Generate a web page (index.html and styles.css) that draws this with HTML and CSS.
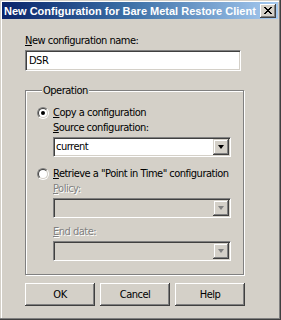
FILE: index.html
```html
<!DOCTYPE html>
<html>
<head>
<meta charset="utf-8">
<link rel="stylesheet" href="styles.css">
</head>
<body>
<div class="window">
  <div class="titlebar">
    <span class="title">New Configuration for Bare Metal Restore Client</span>
    <span class="close"><svg width="8" height="7" viewBox="0 0 8 7"><path d="M0 0h2v1h-2zM6 0h2v1h-2zM1 1h2v1h-2zM5 1h2v1h-2zM2 2h4v1h-4zM3 3h2v1h-2zM2 4h4v1h-4zM1 5h2v1h-2zM5 5h2v1h-2zM0 6h2v1h-2zM6 6h2v1h-2z" fill="#000"/></svg></span>
  </div>
  <div class="content">
    <div class="label name-label"><u>N</u>ew configuration name:</div>
    <div class="textbox">DSR</div>
    <fieldset class="group">
      <legend class="legend">Operation</legend>
      <div class="radio-row first">
        <span class="radio checked"><span class="dot"></span></span>
        <span class="radio-text"><u>C</u>opy a configuration</span>
      </div>
      <div class="sub">
        <div class="label"><u>S</u>ource configuration:</div>
        <div class="combo">
          <span class="combo-text">current</span>
          <span class="combo-btn"><span class="arrow"></span></span>
        </div>
      </div>
      <div class="radio-row second">
        <span class="radio"></span>
        <span class="radio-text"><u>R</u>etrieve a "Point in Time" configuration</span>
      </div>
      <div class="sub">
        <div class="label disabled"><u>P</u>olicy:</div>
        <div class="combo off">
          <span class="combo-text"></span>
          <span class="combo-btn"><span class="arrow"></span></span>
        </div>
        <div class="label disabled end-label"><u>E</u>nd date:</div>
        <div class="combo off">
          <span class="combo-text"></span>
          <span class="combo-btn"><span class="arrow"></span></span>
        </div>
      </div>
    </fieldset>
    <div class="buttons">
      <div class="btn">OK</div>
      <div class="btn">Cancel</div>
      <div class="btn">Help</div>
    </div>
  </div>
</div>
</body>
</html>
```

FILE: styles.css
```css
html, body {
  margin: 0;
  padding: 0;
  background: #d4d0c8;
}
.window {
  width: 281px;
  height: 320px;
  box-sizing: border-box;
  padding: 2px 3px 3px 2px;
  background: #d4d0c8;
  box-shadow: inset -1px -1px 0 #404040, inset -2px -2px 0 #808080, inset 1px 1px 0 #d4d0c8, inset 2px 2px 0 #ffffff;
  font-family: "DejaVu Sans Condensed", "DejaVu Sans", sans-serif;
  font-stretch: condensed;
  font-size: 11px;
  letter-spacing: -0.5px;
  color: #000;
}
.titlebar {
  height: 17px;
  background: linear-gradient(90deg, #0a246a 0%, #3a6ea5 45%, #a6caf0 100%);
  display: flex;
  align-items: center;
  justify-content: space-between;
  padding: 0 2px 0 2px;
}
.title {
  color: #fff;
  font-family: "Liberation Sans", Arial, sans-serif;
  font-stretch: normal;
  font-weight: bold;
  font-size: 11px;
  letter-spacing: 0;
  white-space: nowrap;
}
.close {
  width: 16px;
  height: 14px;
  box-sizing: border-box;
  background: #d4d0c8;
  box-shadow: inset -1px -1px 0 #404040, inset 1px 1px 0 #ffffff, inset -2px -2px 0 #808080;
  display: flex;
  align-items: center;
  justify-content: center;
  padding: 0 1px 1px 0;
}
.close svg { display: block; }
.content {
  padding: 0 0 0 23px;
}
.label {
  line-height: 13px;
  height: 13px;
  white-space: nowrap;
}
.name-label {
  margin-top: 15px;
}
.textbox {
  margin-top: 3px;
  width: 216px;
  height: 21px;
  box-sizing: border-box;
  background: #fff;
  border: 1px solid;
  border-color: #808080 #ffffff #ffffff #808080;
  box-shadow: inset 1px 1px 0 #404040, inset -1px -1px 0 #d4d0c8;
  padding: 0 0 0 3px;
  line-height: 19px;
}
.group {
  margin: 13px 0 0 0;
  width: 219px;
  box-sizing: border-box;
  border: 1px solid #808080;
  box-shadow: 1px 1px 0 #ffffff, inset 1px 1px 0 #ffffff;
  padding: 9px 0 13px 11px;
  min-inline-size: 0;
}
.legend {
  padding: 0 1px;
  margin-left: 5px;
  line-height: 13px;
  background: #d4d0c8;
}
.radio-row {
  display: flex;
  align-items: center;
  height: 13px;
}
.radio-row.second {
  margin-top: 10px;
}
.radio {
  width: 12px;
  height: 12px;
  box-sizing: border-box;
  border-radius: 50%;
  border: 1px solid;
  border-color: #808080 #ffffff #ffffff #808080;
  position: relative;
  flex: none;
}
.radio::before {
  content: "";
  position: absolute;
  inset: 0;
  border-radius: 50%;
  border: 1px solid;
  border-color: #404040 #d4d0c8 #d4d0c8 #404040;
  background: #fff;
}
.radio .dot {
  position: absolute;
  left: 3px;
  top: 3px;
  width: 4px;
  height: 4px;
  border-radius: 50%;
  background: #000;
  z-index: 1;
}
.radio-text {
  margin-left: 4px;
  white-space: nowrap;
}
.sub {
  padding-left: 16px;
}
.sub .label {
  margin-top: 2px;
}
.combo {
  margin-top: 3px;
  width: 178px;
  height: 20px;
  box-sizing: border-box;
  background: #fff;
  border: 1px solid;
  border-color: #808080 #ffffff #ffffff #808080;
  box-shadow: inset 1px 1px 0 #404040, inset -1px -1px 0 #d4d0c8;
  padding: 1px;
  display: flex;
  align-items: stretch;
}
.combo.off {
  background: #d4d0c8;
}
.combo-text {
  flex: 1;
  padding-left: 1px;
  line-height: 16px;
}
.combo-btn {
  width: 16px;
  box-sizing: border-box;
  background: #d4d0c8;
  box-shadow: inset -1px -1px 0 #404040, inset 1px 1px 0 #d4d0c8, inset -2px -2px 0 #808080, inset 2px 2px 0 #ffffff;
  display: flex;
  align-items: center;
  justify-content: center;
}
.arrow {
  width: 0;
  height: 0;
  border-left: 3.5px solid transparent;
  border-right: 3.5px solid transparent;
  border-top: 4px solid #000;
  margin: 0 1px 1px 0;
}
.combo.off .arrow {
  border-top-color: #808080;
}
.disabled {
  color: #808080;
  text-shadow: 1px 1px 0 #ffffff;
}
.sub .end-label {
  margin-top: 7px;
}
.buttons {
  display: flex;
  gap: 5px;
  margin-top: 8px;
}
.btn {
  width: 70px;
  height: 23px;
  box-sizing: border-box;
  background: #d4d0c8;
  box-shadow: inset -1px -1px 0 #404040, inset 1px 1px 0 #ffffff, inset -2px -2px 0 #808080;
  display: flex;
  align-items: center;
  justify-content: center;
}
```
